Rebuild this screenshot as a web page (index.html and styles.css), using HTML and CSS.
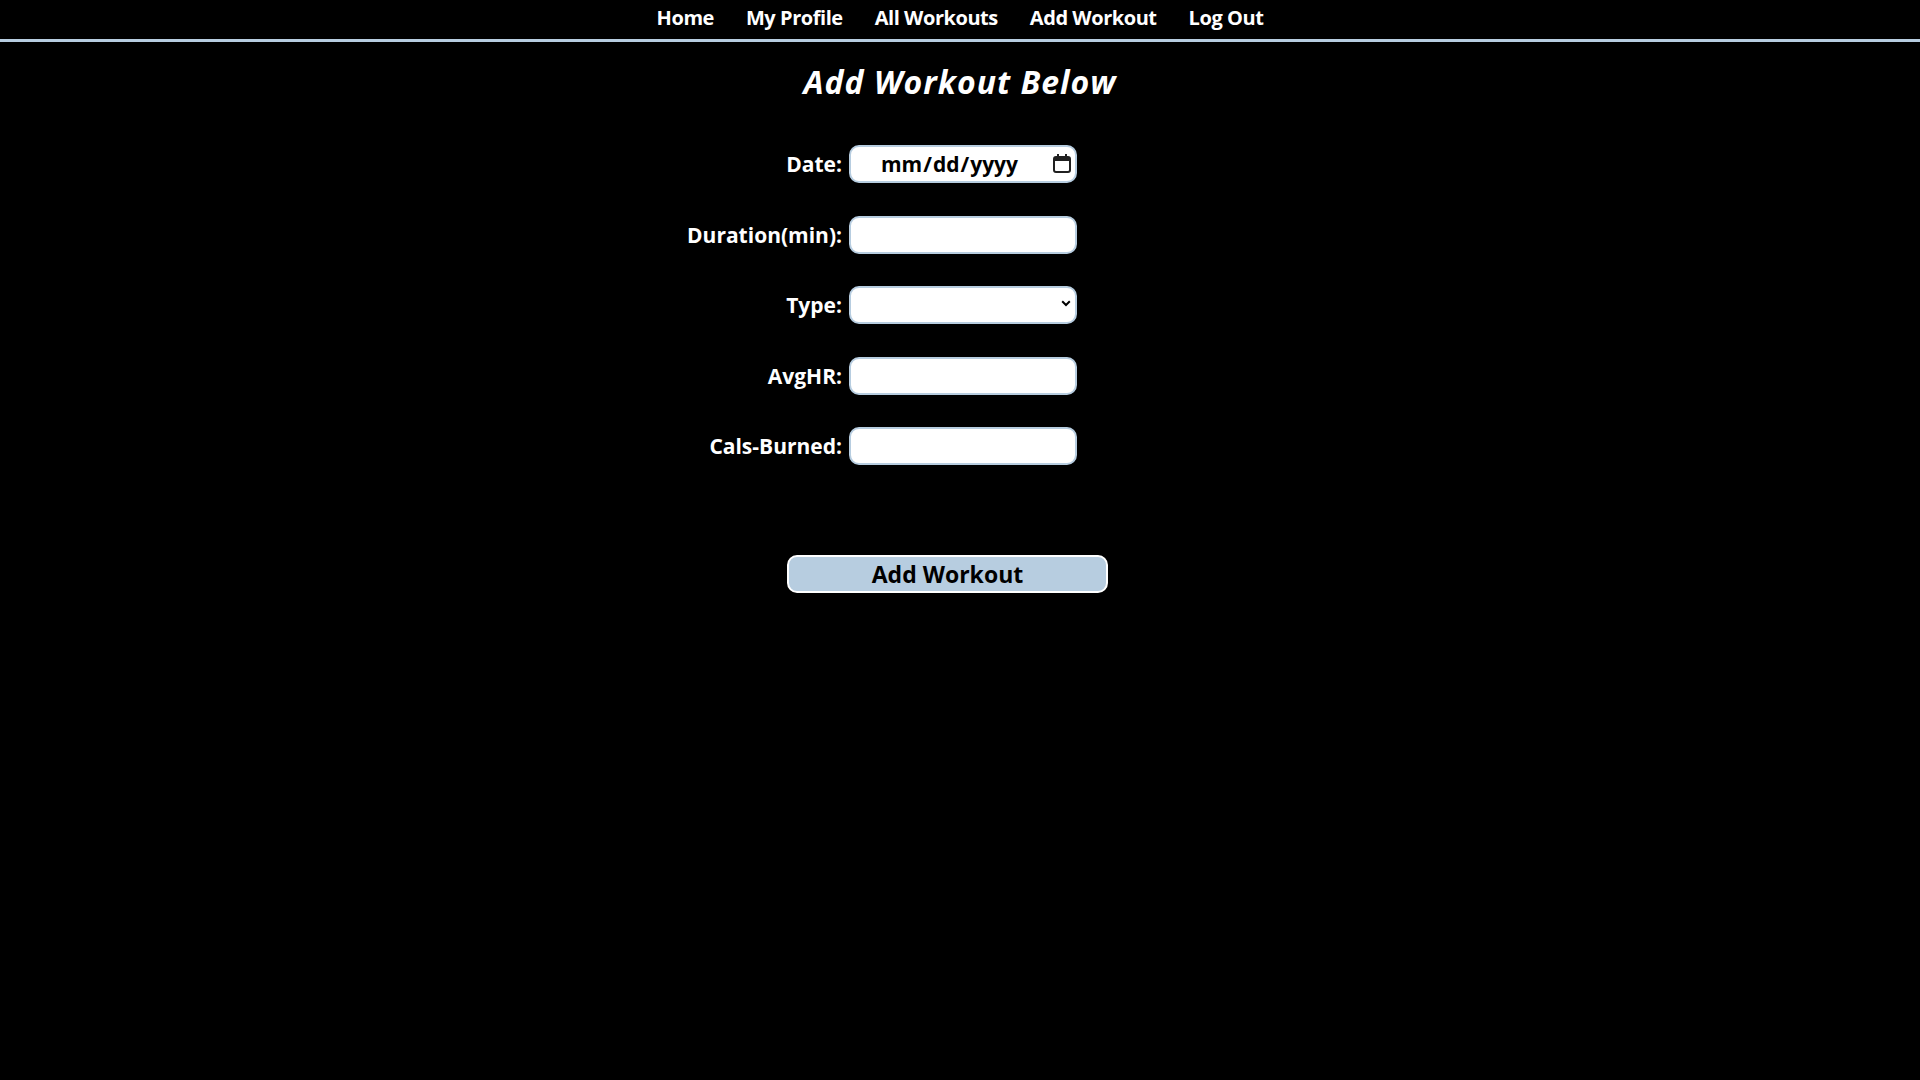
FILE: index.html
```html
<!DOCTYPE html>
<html>
<head>
<meta charset="utf-8">
<title>Add Workout</title>
<link rel="stylesheet" href="styles.css">
</head>
<body>
<nav class="topnav">
  <ul class="navlist">
    <li><a href="#">Home</a></li>
    <li><a href="#">My Profile</a></li>
    <li><a href="#">All Workouts</a></li>
    <li><a href="#">Add Workout</a></li>
    <li><a href="#">Log Out</a></li>
  </ul>
</nav>
<main class="content">
  <h1 class="title">Add Workout Below</h1>
  <form class="workout-form">
    <label class="lbl" for="date">Date:</label>
    <div class="fieldwrap">
      <input class="field datefield" id="date" type="date">
      <svg class="calicon" width="18" height="19" viewBox="0 0 18 19">
        <rect x="1" y="3" width="16" height="15" rx="2" fill="none" stroke="#202020" stroke-width="2"/>
        <rect x="1" y="3" width="16" height="4" fill="#202020"/>
        <rect x="4" y="0" width="2" height="4" fill="#202020"/>
        <rect x="12" y="0" width="2" height="4" fill="#202020"/>
      </svg>
    </div>
    <label class="lbl" for="dur">Duration(min):</label>
    <input class="field" id="dur" type="text">
    <label class="lbl" for="type">Type:</label>
    <div class="fieldwrap">
      <select class="field selectfield" id="type"><option></option></select>
      <svg class="chev" width="10" height="7" viewBox="0 0 10 7"><path d="M1.2 1.3 L5 5 L8.8 1.3" fill="none" stroke="#000" stroke-width="2"/></svg>
    </div>
    <label class="lbl" for="hr">AvgHR:</label>
    <input class="field" id="hr" type="text">
    <label class="lbl" for="cal">Cals-Burned:</label>
    <input class="field" id="cal" type="text">
  </form>
  <div class="btnrow">
    <button class="addbtn" type="button">Add Workout</button>
  </div>
</main>
</body>
</html>
```
FILE: styles.css
```css
html, body {
  margin: 0;
  padding: 0;
  background: #000;
  color: #fff;
  font-family: "Open Sans", Lato, sans-serif;
}
.topnav {
  height: 39px;
  border-bottom: 3px solid #b7cde0;
  display: flex;
  justify-content: center;
}
.navlist {
  list-style: none;
  margin: 0;
  padding: 4px 0 0 0;
  display: flex;
  gap: 32px;
  align-items: flex-start;
}
.navlist a {
  color: #fff;
  text-decoration: none;
  font-weight: 700;
  font-size: 20px;
  letter-spacing: -0.45px;
  line-height: normal;
}
.content {
  display: flex;
  flex-direction: column;
  align-items: center;
}
.title {
  margin: 21px 0 0 0;
  font-size: 32px;
  font-style: italic;
  font-weight: 700;
  line-height: 38px;
  letter-spacing: 1px;
}
.workout-form {
  margin-top: 44px;
  width: 100%;
  display: grid;
  grid-template-columns: 1fr 228px 1fr;
  column-gap: 7px;
  row-gap: 32.5px;
  padding-left: 6px;
  box-sizing: border-box;
}
.lbl {
  grid-column: 1;
  justify-self: end;
  align-self: center;
  font-weight: 700;
  font-size: 21px;
}
.field, .fieldwrap {
  grid-column: 2;
}
.field {
  box-sizing: border-box;
  width: 228px;
  height: 38px;
  border: 2px solid #b7cde0;
  border-radius: 10px;
  background: #fff;
  outline: none;
  font-family: "Open Sans", sans-serif;
  font-weight: 700;
  font-size: 21px;
  color: #000;
  padding: 0 10px;
}
.fieldwrap {
  position: relative;
  width: 228px;
  height: 38px;
}
.datefield {
  text-align: left;
  padding: 0 0 0 29px;
}
.datefield::-webkit-calendar-picker-indicator {
  display: none;
}
.calicon {
  position: absolute;
  left: 204px;
  top: 9px;
  pointer-events: none;
}
.selectfield {
  appearance: none;
  -webkit-appearance: none;
}
.chev {
  position: absolute;
  right: 6px;
  top: 14px;
  pointer-events: none;
}
.btnrow {
  margin-top: 90px;
  display: flex;
  justify-content: center;
  width: 100%;
  padding-right: 25px;
  box-sizing: border-box;
}
.addbtn {
  width: 321px;
  height: 38px;
  background: #b7cde0;
  border: 2px solid #fff;
  border-radius: 10px;
  font-family: "Open Sans", sans-serif;
  font-weight: 700;
  font-size: 23px;
  line-height: 1;
  color: #000;
  padding: 0;
}
```
